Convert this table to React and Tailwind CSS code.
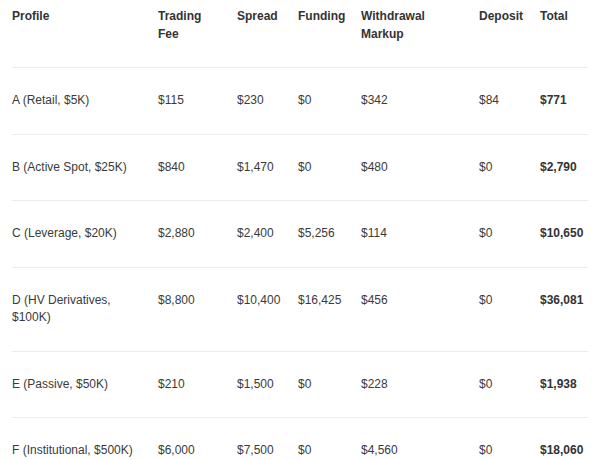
import React from "react";

const rows = [
  ["A (Retail, $5K)", "$115", "$230", "$0", "$342", "$84", "$771"],
  ["B (Active Spot, $25K)", "$840", "$1,470", "$0", "$480", "$0", "$2,790"],
  ["C (Leverage, $20K)", "$2,880", "$2,400", "$5,256", "$114", "$0", "$10,650"],
  ["D (HV Derivatives, $100K)", "$8,800", "$10,400", "$16,425", "$456", "$0", "$36,081"],
  ["E (Passive, $50K)", "$210", "$1,500", "$0", "$228", "$0", "$1,938"],
  ["F (Institutional, $500K)", "$6,000", "$7,500", "$0", "$4,560", "$0", "$18,060"],
];

const headers = ["Profile", "Trading Fee", "Spread", "Funding", "Withdrawal Markup", "Deposit", "Total"];
const widths = ["w-[146px]", "w-[79px]", "w-[61px]", "w-[63px]", "w-[118px]", "w-[61px]", "w-[48px]"];

export default function App() {
  return (
    <div className="bg-white w-[598px] h-[460px] overflow-hidden px-3" style={{ fontFamily: '"Liberation Sans", Arial, sans-serif' }}>
      <table className="table-fixed w-[576px] border-collapse text-[12px] leading-[17.5px] text-[#3a3a3a]">
        <colgroup>
          {widths.map((w, i) => (
            <col key={i} className={w} />
          ))}
        </colgroup>
        <thead>
          <tr className="border-b border-[#ebebeb]">
            {headers.map((h, i) => (
              <th key={i} className="text-left align-top font-bold text-[#333] pt-2 pb-6 pr-3">
                {h}
              </th>
            ))}
          </tr>
        </thead>
        <tbody>
          {rows.map((r, ri) => (
            <tr key={ri} className={ri < rows.length - 1 ? "border-b border-[#ebebeb]" : ""}>
              {r.map((c, ci) => (
                <td
                  key={ci}
                  className={
                    "align-top pt-6 pb-6 pr-3 " + (ci === 6 ? "font-bold text-[#333] pr-0 whitespace-nowrap" : "")
                  }
                >
                  {c}
                </td>
              ))}
            </tr>
          ))}
        </tbody>
      </table>
    </div>
  );
}
